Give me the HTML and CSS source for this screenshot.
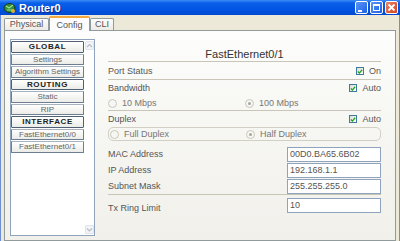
FILE: index.html
```html
<!DOCTYPE html>
<html lang="en">
<head>
  <meta charset="UTF-8" />
  <title>Router0</title>
  <link rel="stylesheet" href="styles.css">
</head>
<body>
  <div class="fenster">
    <div class="titelleiste">
      <svg class="app-icon" width="13" height="12" viewBox="0 0 13 12">
        <ellipse cx="6.5" cy="6" rx="5.5" ry="4.5" fill="#2f8f3a" stroke="#14361a" stroke-width="1"/>
        <path d="M3 4 L6 6 L10 3 M4 8 L9 8" stroke="#9fe08a" stroke-width="1.2" fill="none"/>
        <circle cx="10" cy="9" r="2" fill="#d9b23b"/>
      </svg>
      <span class="titel">Router0</span>
      <div class="knoepfe">
        <span class="knopf min"></span>
        <span class="knopf max"></span>
        <span class="knopf schliessen">
          <svg width="13" height="13" viewBox="0 0 13 13"><path d="M3.5 3.5 L9.5 9.5 M9.5 3.5 L3.5 9.5" stroke="#fff" stroke-width="1.8"/></svg>
        </span>
      </div>
    </div>

    <div class="inhalt">
      <div class="reiter">
        <div class="tab tab-physical">Physical</div>
        <div class="tab tab-config aktiv">Config</div>
        <div class="tab tab-cli">CLI</div>
      </div>

      <div class="panel">
        <div class="liste">
          <div class="menue">
            <div class="eintrag kopf">GLOBAL</div>
            <div class="eintrag">Settings</div>
            <div class="eintrag">Algorithm Settings</div>
            <div class="eintrag kopf">ROUTING</div>
            <div class="eintrag">Static</div>
            <div class="eintrag">RIP</div>
            <div class="eintrag kopf">INTERFACE</div>
            <div class="eintrag">FastEthernet0/0</div>
            <div class="eintrag">FastEthernet0/1</div>
          </div>
          <div class="scrollbar">
            <span class="pfeil">
              <svg width="9" height="9" viewBox="0 0 9 9"><path d="M2 6 L4.5 3.5 L7 6" stroke="#b7bcc6" stroke-width="1.2" fill="none"/></svg>
            </span>
            <span class="pfeil">
              <svg width="9" height="9" viewBox="0 0 9 9"><path d="M2 3.5 L4.5 6 L7 3.5" stroke="#b7bcc6" stroke-width="1.2" fill="none"/></svg>
            </span>
          </div>
        </div>

        <div class="einstellungen">
          <div class="ueberschrift">FastEthernet0/1</div>

          <div class="zeile trenner hoch">
            <span>Port Status</span>
            <span class="check"><span class="box"><svg width="7" height="7" viewBox="0 0 7 7"><path d="M1 3.5 L2.8 5.3 L6 1.5" stroke="#21a121" stroke-width="1.5" fill="none"/></svg></span>On</span>
          </div>

          <div class="zeile">
            <span>Bandwidth</span>
            <span class="check"><span class="box"><svg width="7" height="7" viewBox="0 0 7 7"><path d="M1 3.5 L2.8 5.3 L6 1.5" stroke="#21a121" stroke-width="1.5" fill="none"/></svg></span>Auto</span>
          </div>
          <div class="radios trenner">
            <span class="radio"><span class="kreis"></span>10 Mbps</span>
            <span class="radio"><span class="kreis an"></span>100 Mbps</span>
          </div>

          <div class="zeile">
            <span>Duplex</span>
            <span class="check"><span class="box"><svg width="7" height="7" viewBox="0 0 7 7"><path d="M1 3.5 L2.8 5.3 L6 1.5" stroke="#21a121" stroke-width="1.5" fill="none"/></svg></span>Auto</span>
          </div>
          <div class="radios gruppe">
            <span class="radio"><span class="kreis"></span>Full Duplex</span>
            <span class="radio"><span class="kreis an"></span>Half Duplex</span>
          </div>

          <div class="zeile feld erste">
            <span>MAC Address</span>
            <span class="eingabe">00D0.BA65.6B02</span>
          </div>
          <div class="zeile feld">
            <span>IP Address</span>
            <span class="eingabe">192.168.1.1</span>
          </div>
          <div class="zeile feld trenner">
            <span>Subnet Mask</span>
            <span class="eingabe">255.255.255.0</span>
          </div>
          <div class="zeile feld tx">
            <span>Tx Ring Limit</span>
            <span class="eingabe">10</span>
          </div>
        </div>
      </div>
    </div>
  </div>
</body>
</html>
```

FILE: styles.css
```css
body {
  margin: 0;
  width: 400px;
  height: 241px;
  overflow: hidden;
  font-family: "Liberation Sans", Arial, sans-serif;
  background: #ece9d8;
}

.fenster {
  width: 400px;
  height: 241px;
  display: flex;
  flex-direction: column;
}

/* Titelleiste im XP-Stil */
.titelleiste {
  height: 15px;
  flex: none;
  display: flex;
  align-items: center;
  background: linear-gradient(#3d8bf5 0, #0a5fe8 3px, #0055e5 60%, #0049d0 100%);
  padding-left: 3px;
}

.app-icon {
  margin-right: 3px;
}

.titel {
  color: white;
  font-weight: bold;
  font-size: 11px;
  text-shadow: 1px 1px 0 #0a2a88;
}

.knoepfe {
  margin-left: auto;
  display: flex;
  gap: 2px;
  padding-right: 2px;
}

.knopf {
  width: 13px;
  height: 13px;
  box-sizing: border-box;
  border: 1px solid #fff;
  border-radius: 2px;
  background: linear-gradient(135deg, #5d95f7, #1c5fe3);
  position: relative;
  display: flex;
  align-items: center;
  justify-content: center;
}

.knopf.min::after {
  content: "";
  width: 4px;
  height: 2px;
  background: white;
  margin: 6px 4px 0 0;
}

.knopf.max::after {
  content: "";
  width: 5px;
  height: 4px;
  border: 1px solid white;
  border-top-width: 2px;
}

.knopf.schliessen {
  background: linear-gradient(135deg, #e9856a, #d6421c);
}

.knopf.schliessen svg {
  position: absolute;
  left: -1px;
  top: -1px;
}

/* Reiter */
.inhalt {
  flex: 1;
  display: flex;
  flex-direction: column;
  padding: 0 3px;
  border-left: 1px solid #6e8fd8;
  border-right: 1px solid #6e8fd8;
}

.reiter {
  height: 15px;
  display: flex;
  align-items: flex-end;
  padding-left: 0;
}

.tab {
  height: 12px;
  box-sizing: border-box;
  border: 1px solid #919b9c;
  border-bottom: none;
  border-radius: 2px 2px 0 0;
  background: linear-gradient(#fefefe, #ecebe5);
  color: #555;
  font-size: 9px;
  line-height: 11px;
  text-align: center;
}

.tab-physical { width: 45px; }
.tab-config { width: 41px; }
.tab-cli { width: 24px; }

.tab.aktiv {
  height: 15px;
  line-height: 14px;
  background: #fcfcfe;
  border-top: 2px solid #f4a83c;
  margin-bottom: -1px;
  position: relative;
}

.panel {
  flex: 1;
  display: flex;
  border: 1px solid #919b9c;
  background: linear-gradient(#fdfdfd, #f7f7f3 40%, #f1f0eb);
  padding: 8px 0 0 5px;
  min-height: 0;
}

/* linke Liste */
.liste {
  width: 85px;
  height: 197px;
  box-sizing: border-box;
  border: 1px solid #8fa3bd;
  background: white;
  display: flex;
  flex: none;
}

.menue {
  width: 73px;
  display: flex;
  flex-direction: column;
  gap: 1px;
  padding-top: 1px;
}

.eintrag {
  height: 11.5px;
  box-sizing: border-box;
  border: 1px solid #6d7d92;
  border-top-color: #a7b2bf;
  border-radius: 1px;
  background: linear-gradient(#ffffff, #ebebe7);
  color: #666;
  font-size: 8px;
  line-height: 9.5px;
  text-align: center;
  white-space: nowrap;
}

.eintrag.kopf {
  border-color: #4f5f74;
  color: #222;
  font-weight: bold;
  letter-spacing: 0.6px;
}

.scrollbar {
  flex: 1;
  display: flex;
  flex-direction: column;
  justify-content: space-between;
  padding: 1px 0 1px 1px;
}

.pfeil {
  width: 9px;
  height: 9px;
  background: #f1f3f7;
  border: 1px solid #e0e4ec;
  border-radius: 1px;
  box-sizing: border-box;
  display: flex;
}

.pfeil svg {
  margin: -1px;
}

/* rechte Einstellungen */
.einstellungen {
  width: 273px;
  margin-left: 13px;
  padding-top: 4px;
  color: #555;
  font-size: 9px;
}

.ueberschrift {
  height: 18px;
  box-sizing: border-box;
  padding-top: 4px;
  border-bottom: 1px solid #c9c6b8;
  text-align: center;
  font-size: 11px;
  line-height: 14px;
  color: #333;
  height: 19px;
}

.zeile {
  height: 16px;
  display: flex;
  align-items: center;
  justify-content: space-between;
}

.zeile.hoch {
  height: 17px;
}

.trenner {
  border-bottom: 1px solid #c9c6b8;
}

.check {
  display: flex;
  align-items: center;
  gap: 5px;
}

.box {
  width: 8px;
  height: 8px;
  box-sizing: border-box;
  border: 1px solid #3d7a9c;
  background: linear-gradient(135deg, #dcdcd6, #fff);
  display: flex;
}

.box svg {
  margin: 0;
}

.radios {
  height: 14px;
  display: grid;
  grid-template-columns: 137px 1fr;
  align-items: center;
}

.radios.gruppe {
  height: 14px;
  box-sizing: border-box;
  border: 1px solid #d2d0c4;
  border-radius: 5px;
}

.radio {
  display: flex;
  align-items: center;
  gap: 5px;
  color: #777;
}

.gruppe .radio:first-child {
  margin-left: 1px;
}

.kreis {
  width: 9px;
  height: 9px;
  box-sizing: border-box;
  border: 1px solid #cac8bb;
  border-radius: 50%;
  background: #f6f6f2;
  display: flex;
  align-items: center;
  justify-content: center;
}

.kreis.an::after {
  content: "";
  width: 3px;
  height: 3px;
  border-radius: 50%;
  background: #a9a79c;
}

.feld.erste {
  margin-top: 5px;
}

.feld.tx {
  height: 18px;
  align-items: flex-end;
}

.eingabe {
  width: 94px;
  height: 15px;
  box-sizing: border-box;
  border: 1px solid #8fa3bd;
  background: white;
  padding-left: 2px;
  font-size: 9px;
  line-height: 13px;
  color: #555;
}
```
